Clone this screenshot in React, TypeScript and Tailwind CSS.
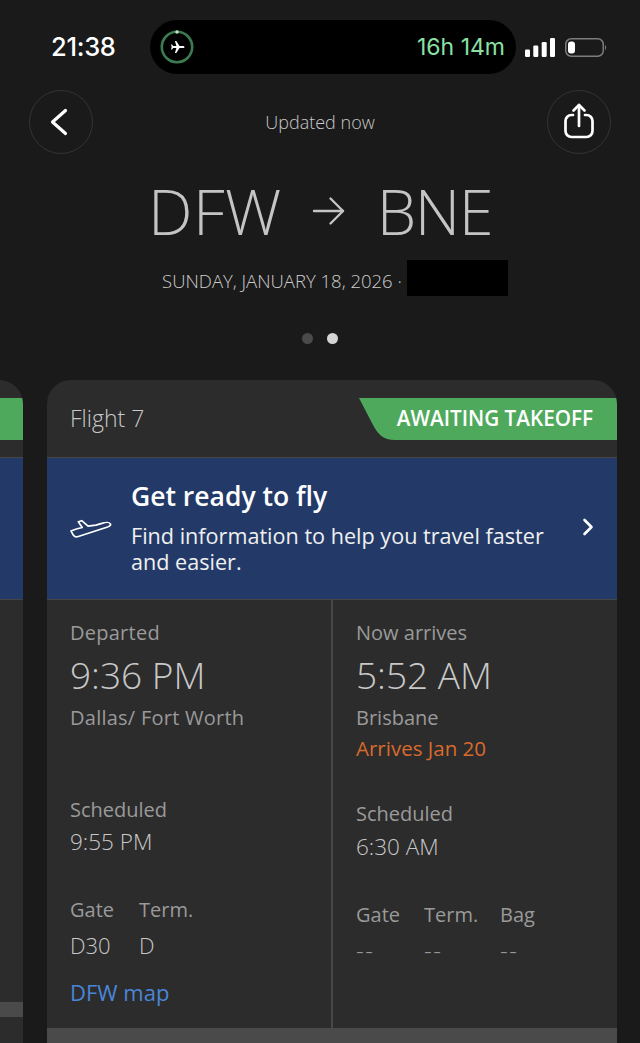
import React from "react";

function Signal() {
  return (
    <svg width="30" height="19" viewBox="0 0 30 19" fill="#fff">
      <rect x="0" y="11.500" width="5" height="7.500" rx="1.200" />
      <rect x="8.300" y="7.500" width="5" height="11.500" rx="1.200" />
      <rect x="16.700" y="4" width="5" height="15" rx="1.200" />
      <rect x="25" y="0" width="5" height="19" rx="1.200" />
    </svg>
  );
}

function Battery() {
  return (
    <svg width="42" height="19" viewBox="0 0 42 19" fill="none">
      <rect x="0.750" y="0.750" width="37.500" height="17.500" rx="5.500" stroke="#7d7d7d" strokeWidth="1.500" />
      <rect x="3" y="3.500" width="7" height="12" rx="3" fill="#fff" />
      <path d="M40 7c1.500.5 1.500 4.500 0 5z" fill="#7d7d7d" />
    </svg>
  );
}

function PlaneRing() {
  return (
    <svg width="34" height="34" viewBox="0 0 34 34" fill="none">
      <circle cx="17" cy="17" r="15.200" stroke="#3c7a52" strokeWidth="2.600" />
      <circle cx="17" cy="2" r="1.700" fill="#bfe6cb" />
      <path
        d="M24.500 17c0-.7-.7-1.100-1.500-1.100h-3.500l-3.200-4.900h-1.400l1.500 4.900h-3.300l-1-1.300h-1.100l.7 2.400-.7 2.400h1.100l1-1.300h3.300l-1.500 4.900h1.400l3.200-4.900H23c.8 0 1.500-.4 1.500-1.100z"
        fill="#fff"
      />
    </svg>
  );
}

function BackIcon() {
  return (
    <svg width="18" height="28" viewBox="0 0 18 28" fill="none">
      <path d="M15.500 2.500 2.500 14l13 11.500" stroke="#fff" strokeWidth="3.200" strokeLinecap="round" strokeLinejoin="round" />
    </svg>
  );
}

function ShareIcon() {
  return (
    <svg width="30" height="36" viewBox="0 0 30 36" fill="none" stroke="#fff" strokeWidth="2.700" strokeLinecap="round" strokeLinejoin="round">
      <path d="M9 12H7.500a6 6 0 0 0-6 6v10a6 6 0 0 0 6 6h15a6 6 0 0 0 6-6V18a6 6 0 0 0-6-6H21" />
      <path d="M15 23V2" />
      <path d="M9.500 7.500 15 2l5.500 5.500" />
    </svg>
  );
}

function ArrowIcon() {
  return (
    <svg width="34" height="30" viewBox="0 0 34 30" fill="none" stroke="#c4c4c4" strokeWidth="2.400" strokeLinecap="round" strokeLinejoin="round">
      <path d="M2 15H31" />
      <path d="M18.500 2.500 31 15 18.500 27.500" />
    </svg>
  );
}

function PlaneOutline() {
  return (
    <svg width="42" height="20" viewBox="-0.500 -0.500 43 20" fill="none" stroke="#fff" strokeWidth="1.700" strokeLinejoin="round" strokeLinecap="round">
      <path d="M41 4.500 C40 2.500 36 2.500 33 3.500 L26 5.500 L18 6.500 L11.500 1 L8 2 L12 8 L6 9.500 L0.500 11.500 L3 16 C4.500 18 6 18 8 17.200 L38 7.500 C40 6.800 41.300 5.500 41 4.500 Z" />
    </svg>
  );
}

function BadgeShape() {
  return (
    <svg className="absolute inset-0 h-full w-full" viewBox="0 0 258 42" preserveAspectRatio="none">
      <path d="M0 0H258V42H36C24 42 19 36 14 27Z" fill="#4fa95c" />
    </svg>
  );
}

function Chevron() {
  return (
    <svg width="12" height="18" viewBox="0 0 12 18" fill="none">
      <path d="M2.500 2 9.500 9l-7 7" stroke="#fff" strokeWidth="2.600" strokeLinecap="round" strokeLinejoin="round" />
    </svg>
  );
}

function GateStat({ label, value }: { label: string; value: string }) {
  return (
    <div className="flex flex-col">
      <span className="text-[20px] leading-[24px] text-[#9a9a9a]">{label}</span>
      <span className="mt-[11px] text-[22px] font-light leading-[24px] text-[#c8c8c8]">{value}</span>
    </div>
  );
}

function EmptyStat({ label }: { label: string }) {
  return (
    <div className="flex flex-col">
      <span className="text-[20px] leading-[24px] text-[#9a9a9a]">{label}</span>
      <span className="mt-[11px] text-[24px] font-light leading-[24px] tracking-[1.500px] text-[#969696]">--</span>
    </div>
  );
}

export default function App() {
  return (
    <div className="flex h-[1043px] w-[640px] flex-col overflow-hidden bg-[#1a1a1a] font-['Open_Sans',sans-serif]">
      <div className="mt-[20px] flex h-[54px] items-center">
        <span className="ml-[51px] w-[99px] font-['Inter',sans-serif] text-[25.500px] font-medium tracking-[-0.300px] text-white">21:38</span>
        <div className="flex h-[54px] w-[366px] items-center justify-between rounded-[27px] bg-black pl-[10px] pr-[11px]">
          <PlaneRing />
          <span className="font-['Inter',sans-serif] text-[23px] text-[#8be0a6]">16h 14m</span>
        </div>
        <div className="ml-[9px] flex items-center gap-[9.500px]">
          <Signal />
          <Battery />
        </div>
      </div>

      <div className="mt-[16px] flex items-center justify-between px-[29px]">
        <button className="flex h-[64px] w-[64px] items-center justify-center rounded-full border border-[#333333] pr-[5px]">
          <BackIcon />
        </button>
        <span className="text-[18px] font-light text-[#c8c8c8]">Updated now</span>
        <button className="flex h-[64px] w-[64px] items-center justify-center rounded-full border border-[#333333] pb-[3px]">
          <ShareIcon />
        </button>
      </div>

      <div className="mt-[13px] flex items-center justify-center text-[63px] font-light leading-[88px] text-[#c4c4c4]">
        <span className="tracking-[0.500px]">DFW</span>
        <span className="ml-[30px] mr-[31px] flex"><ArrowIcon /></span>
        <span className="tracking-[-1.500px]">BNE</span>
      </div>

      <div className="mt-[5px] flex h-[36px] items-center justify-center pl-[30px] text-[18.500px] font-light text-[#cccccc]">
        <span className="mt-[6px]">SUNDAY, JANUARY 18, 2026 ·</span>
        <span className="ml-[5px] h-[36px] w-[101px] bg-black" />
      </div>

      <div className="mt-[37px] flex justify-center gap-[14px]">
        <span className="h-[11px] w-[11px] rounded-full bg-[#4a4a4a]" />
        <span className="h-[11px] w-[11px] rounded-full bg-[#d4d4d4]" />
      </div>

      <div className="mt-[36px] flex gap-[24px]">
        <div className="ml-[-547px] flex w-[570px] shrink-0 flex-col overflow-hidden rounded-t-[24px] bg-[#2c2c2c]">
          <div className="mt-[18px] h-[42px] shrink-0 bg-[#4fa95c]" />
          <div className="mt-[17px] h-[143px] shrink-0 border-y border-[#454545] bg-[#233a68]" />
          <div className="mt-[402px] h-[15px] shrink-0 bg-[#4a4a4a]" />
        </div>

        <div className="flex h-[663px] w-[570px] shrink-0 flex-col overflow-hidden rounded-t-[24px] bg-[#2c2c2c]">
          <div className="flex h-[77px] shrink-0 items-start justify-between">
            <span className="ml-[23px] mt-[22px] text-[23px] font-light leading-[32px] text-[#c8c8c8]">Flight 7</span>
            <div className="relative mt-[18px] flex h-[42px] w-[258px] items-center justify-end pr-[24px]">
              <BadgeShape />
              <span className="relative text-[20.700px] font-semibold text-white">AWAITING TAKEOFF</span>
            </div>
          </div>

          <div className="flex h-[143px] shrink-0 items-start border-y border-[#454545] bg-[#233a68] pl-[23px] pr-[23px] pt-[21px]">
            <span className="mt-[40px] w-[61px] shrink-0"><PlaneOutline /></span>
            <div className="flex-1">
              <div className="text-[26.500px] font-semibold leading-[34px] text-white">Get ready to fly</div>
              <div className="mt-[10px] text-[21.600px] leading-[26px] text-[#f0f0f0]">
                <div>Find information to help you travel faster</div>
                <div>and easier.</div>
              </div>
            </div>
            <span className="mt-[39px] flex"><Chevron /></span>
          </div>

          <div className="grid flex-1 grid-cols-[286px_1fr]">
            <div className="flex flex-col border-r-2 border-[#484848] pl-[23px] pt-[21px]">
              <span className="text-[20px] leading-[24px] tracking-[0.250px] text-[#9a9a9a]">Departed</span>
              <span className="mt-[5px] text-[37px] font-light leading-[50px] text-[#c8c8c8]">9:36 PM</span>
              <span className="mt-[6px] text-[20px] leading-[24px] tracking-[0.250px] text-[#9a9a9a]">Dallas/ Fort Worth</span>
              <span className="mt-[68px] text-[20px] leading-[24px] text-[#9a9a9a]">Scheduled</span>
              <span className="mt-[8px] text-[22.500px] font-light leading-[24px] text-[#c8c8c8]">9:55 PM</span>
              <div className="mt-[44px] flex">
                <div className="w-[69px]"><GateStat label="Gate" value="D30" /></div>
                <GateStat label="Term." value="D" />
              </div>
              <span className="mt-[23px] text-[22px] leading-[24px] text-[#4a86d8]">DFW map</span>
            </div>
            <div className="flex flex-col pl-[23px] pt-[21px]">
              <span className="text-[20px] leading-[24px] text-[#9a9a9a]">Now arrives</span>
              <span className="mt-[5px] text-[37px] font-light leading-[50px] text-[#c8c8c8]">5:52 AM</span>
              <span className="mt-[6px] text-[20px] leading-[24px] text-[#9a9a9a]">Brisbane</span>
              <span className="mt-[6px] text-[20.500px] leading-[24px] text-[#d96a2c]">Arrives Jan 20</span>
              <span className="mt-[42px] text-[20px] leading-[24px] text-[#9a9a9a]">Scheduled</span>
              <span className="mt-[9px] text-[22.500px] font-light leading-[24px] text-[#c8c8c8]">6:30 AM</span>
              <div className="mt-[44px] flex">
                <div className="w-[68px]"><EmptyStat label="Gate" /></div>
                <div className="w-[76px]"><EmptyStat label="Term." /></div>
                <EmptyStat label="Bag" />
              </div>
            </div>
          </div>

          <div className="h-[15px] shrink-0 bg-[#4a4a4a]" />
        </div>
      </div>
    </div>
  );
}
